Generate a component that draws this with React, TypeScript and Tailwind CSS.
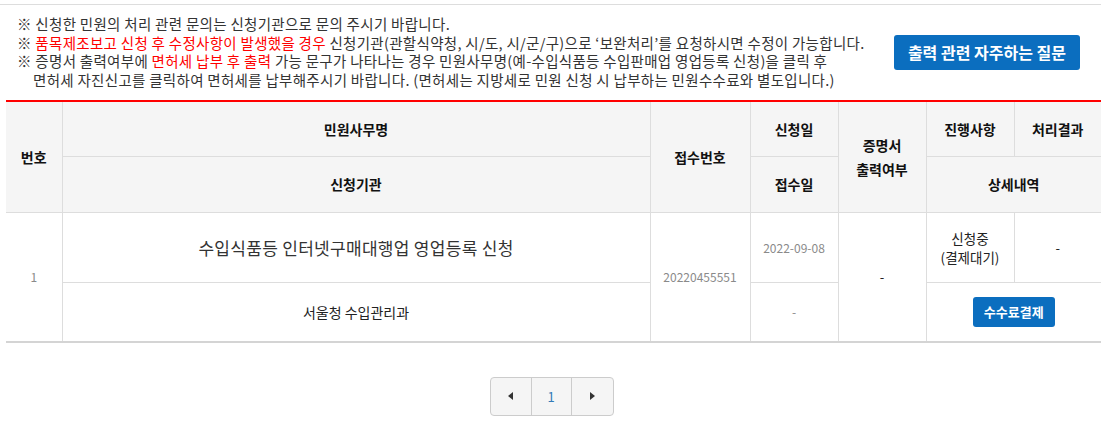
const NoticeBlock = () => {
  return (
    <div className="flex items-center justify-between pt-[10px] pb-[10px] pl-[17px] pr-[29px]">
      <div className="text-[14.5px] tracking-[0.3px] leading-[18.7px] text-[#333] whitespace-nowrap">
        <p>※ 신청한 민원의 처리 관련 문의는 신청기관으로 문의 주시기 바랍니다.</p>
        <p>
          ※ <span className="text-[#f00]">품목제조보고 신청 후 수정사항이 발생했을 경우</span> 신청기관(관할식약청, 시/도,
          시/군/구)으로 ‘보완처리’를 요청하시면 수정이 가능합니다.
        </p>
        <p>
          ※ 증명서 출력여부에 <span className="text-[#f00]">면허세 납부 후 출력</span> 가능 문구가 나타나는 경우
          민원사무명(예-수입식품등 수입판매업 영업등록 신청)을 클릭 후
        </p>
        <p className="pl-[16px]">
          면허세 자진신고를 클릭하여 면허세를 납부해주시기 바랍니다. (면허세는 지방세로 민원 신청 시 납부하는 민원수수료와
          별도입니다.)
        </p>
      </div>
      <button className="shrink-0 whitespace-nowrap h-[35px] px-[14px] rounded-[3px] bg-[#0b6ebf] text-white text-[16px] font-bold">
        출력 관련 자주하는 질문
      </button>
    </div>
  );
};

const th = "border border-[#ddd] bg-[#f5f5f5] text-[14px] font-semibold text-[#111] text-center align-middle";
const td = "border border-[#ddd] text-center align-middle";

const ResultTable = () => {
  return (
    <table className="ml-[6px] w-[1095px] table-fixed border-collapse border-t-2 border-t-[#f00] border-b-2 border-b-[#d4d4d4]">
      <colgroup>
        <col className="w-[56px]" />
        <col className="w-[588px]" />
        <col className="w-[100px]" />
        <col className="w-[88px]" />
        <col className="w-[88px]" />
        <col className="w-[88px]" />
        <col className="w-[87px]" />
      </colgroup>
      <thead>
        <tr className="h-[56px]">
          <th rowSpan={2} className={`${th} border-l-0`}>
            번호
          </th>
          <th className={th}>민원사무명</th>
          <th rowSpan={2} className={th}>
            접수번호
          </th>
          <th className={th}>신청일</th>
          <th rowSpan={2} className={`${th} leading-[24px]`}>
            증명서
            <br />
            출력여부
          </th>
          <th className={th}>진행사항</th>
          <th className={`${th} border-r-0`}>처리결과</th>
        </tr>
        <tr className="h-[56px]">
          <th className={th}>신청기관</th>
          <th className={th}>접수일</th>
          <th colSpan={2} className={`${th} border-r-0`}>
            상세내역
          </th>
        </tr>
      </thead>
      <tbody>
        <tr className="h-[70px]">
          <td rowSpan={2} className={`${td} border-l-0 text-[12px] text-[#8a8a8a]`}>
            1
          </td>
          <td className={`${td} text-[17px] tracking-[0.3px] text-[#333]`}>수입식품등 인터넷구매대행업 영업등록 신청</td>
          <td rowSpan={2} className={`${td} text-[12px] text-[#8a8a8a]`}>
            20220455551
          </td>
          <td className={`${td} text-[12px] text-[#8a8a8a]`}>2022-09-08</td>
          <td rowSpan={2} className={`${td} text-[13px] text-[#222]`}>
            -
          </td>
          <td className={`${td} text-[13.5px] leading-[19px] text-[#222]`}>
            신청중
            <br />
            (결제대기)
          </td>
          <td className={`${td} border-r-0 text-[13px] text-[#222]`}>-</td>
        </tr>
        <tr className="h-[59px]">
          <td className={`${td} text-[14px] text-[#222]`}>서울청 수입관리과</td>
          <td className={`${td} text-[12px] text-[#8a8a8a]`}>-</td>
          <td colSpan={2} className={`${td} border-r-0`}>
            <button className="h-[30px] w-[82px] rounded-[3px] bg-[#0b6ebf] text-white text-[13px] font-bold">
              수수료결제
            </button>
          </td>
        </tr>
      </tbody>
    </table>
  );
};

const Pagination = () => {
  return (
    <div className="flex justify-center mt-[34px] pr-[6px]">
      <div className="flex h-[39px] rounded-[4px] border border-[#ccc] bg-[#f5f5f5] overflow-hidden">
        <button className="w-[41px] flex items-center justify-center border-r border-[#ccc]">
          <svg width="5" height="8" viewBox="0 0 5 8">
            <path d="M5 0 L0 4 L5 8 Z" fill="#333" />
          </svg>
        </button>
        <button className="w-[40px] flex items-center justify-center border-r border-[#ccc] text-[13px] text-[#337ab7]">
          1
        </button>
        <button className="w-[41px] flex items-center justify-center">
          <svg width="5" height="8" viewBox="0 0 5 8">
            <path d="M0 0 L5 4 L0 8 Z" fill="#333" />
          </svg>
        </button>
      </div>
    </div>
  );
};

export default function App() {
  return (
    <div className="w-[1109px] h-[422px] bg-white font-['Noto_Sans_CJK_KR','Noto_Sans',sans-serif] overflow-hidden">
      <div className="mt-[4px] w-[1101px] border-t border-[#ddd]" />
      <NoticeBlock />
      <ResultTable />
      <Pagination />
    </div>
  );
}
